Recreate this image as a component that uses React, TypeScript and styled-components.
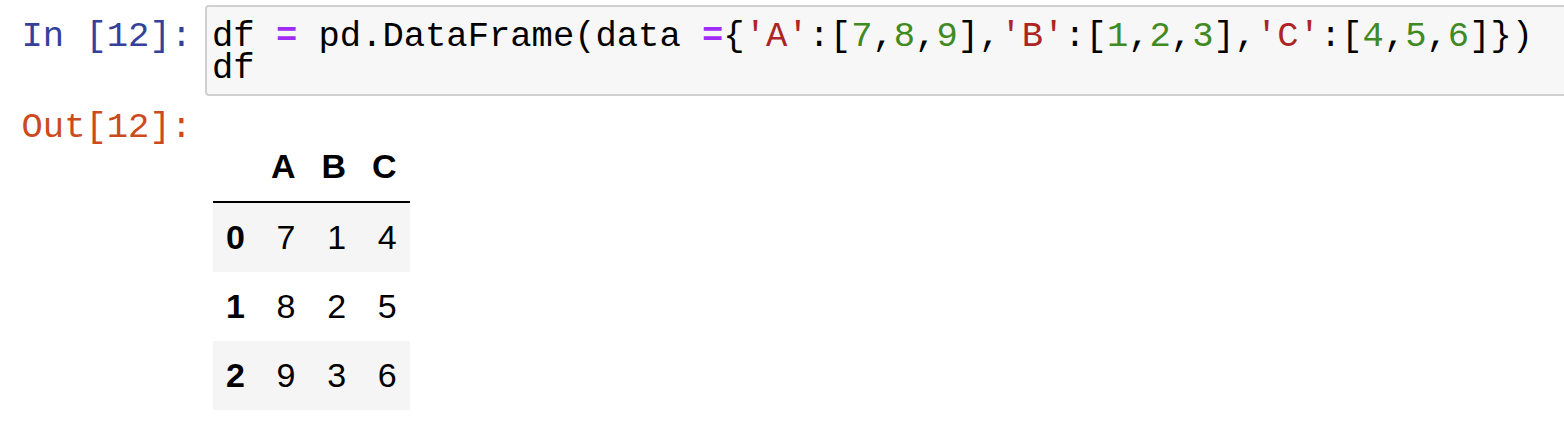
import React from "react";
import styled, { createGlobalStyle } from "styled-components";

const GlobalStyle = createGlobalStyle`
  html, body {
    margin: 0;
    padding: 0;
    background: #ffffff;
    overflow: hidden;
  }
  body {
    font-family: "Liberation Sans", Arial, sans-serif;
  }
`;

const Notebook = styled.div`
  display: flex;
  flex-direction: column;
  padding-top: 5px;
`;

const CellRow = styled.div`
  display: flex;
  align-items: flex-start;
`;

const Prompt = styled.div<{ $kind: "in" | "out" }>`
  flex: 0 0 192px;
  width: 192px;
  text-align: right;
  font-family: "Liberation Mono", "Courier New", monospace;
  font-size: 35.5px;
  line-height: 32px;
  padding-top: 16px;
  white-space: pre;
  color: ${(p) => (p.$kind === "in" ? "#33409c" : "#cc4a1e")};
`;

const InputArea = styled.div`
  flex: 0 0 auto;
  width: 1420px;
  margin-left: 13px;
  box-sizing: border-box;
  border: 2px solid #d0d0d0;
  border-radius: 4px;
  background: #f7f7f7;
  padding: 14px 0 9px 5px;
`;

const CodeLine = styled.div`
  font-family: "Liberation Mono", "Courier New", monospace;
  font-size: 35.5px;
  line-height: 32px;
  color: #000000;
  white-space: pre;
`;

type TokKind = "op" | "str" | "num" | "plain";

const Tok = styled.span<{ $kind: TokKind }>`
  color: ${(p) =>
    p.$kind === "op"
      ? "#a22cf7"
      : p.$kind === "str"
      ? "#ae2424"
      : p.$kind === "num"
      ? "#3f8a22"
      : "#000000"};
  font-weight: ${(p) => (p.$kind === "op" ? 700 : 400)};
`;

const OutputArea = styled.div`
  margin-left: 21px;
  padding-top: 36px;
`;

const DataTable = styled.table`
  border-collapse: collapse;
  border-spacing: 0;
  font-family: "Liberation Sans", Arial, Helvetica, sans-serif;
  font-size: 34px;
  color: #000000;
`;

const HeadRow = styled.tr`
  border-bottom: 2px solid #000000;
`;

const HeadCell = styled.th`
  font-weight: 700;
  text-align: right;
  vertical-align: bottom;
  padding: 15px 13px;
  line-height: normal;
`;

const BodyRow = styled.tr<{ $striped: boolean }>`
  background: ${(p) => (p.$striped ? "#f5f5f5" : "#ffffff")};
`;

const IndexCell = styled.th`
  font-weight: 700;
  text-align: right;
  vertical-align: middle;
  padding: 15px 13px;
  line-height: normal;
`;

const ValueCell = styled.td`
  font-weight: 400;
  text-align: right;
  vertical-align: middle;
  padding: 15px 13px;
  line-height: normal;
`;

const codeTokens: [TokKind, string][] = [
  ["plain", "df "],
  ["op", "="],
  ["plain", " pd.DataFrame(data "],
  ["op", "="],
  ["plain", "{"],
  ["str", "'A'"],
  ["plain", ":["],
  ["num", "7"],
  ["plain", ","],
  ["num", "8"],
  ["plain", ","],
  ["num", "9"],
  ["plain", "],"],
  ["str", "'B'"],
  ["plain", ":["],
  ["num", "1"],
  ["plain", ","],
  ["num", "2"],
  ["plain", ","],
  ["num", "3"],
  ["plain", "],"],
  ["str", "'C'"],
  ["plain", ":["],
  ["num", "4"],
  ["plain", ","],
  ["num", "5"],
  ["plain", ","],
  ["num", "6"],
  ["plain", "]})"],
];

const columns = ["A", "B", "C"];
const rows: { index: number; values: number[] }[] = [
  { index: 0, values: [7, 1, 4] },
  { index: 1, values: [8, 2, 5] },
  { index: 2, values: [9, 3, 6] },
];

export default function App() {
  return (
    <>
      <GlobalStyle />
      <Notebook>
        <CellRow>
          <Prompt $kind="in">In [12]:</Prompt>
          <InputArea>
            <CodeLine>
              {codeTokens.map(([kind, text], i) => (
                <Tok key={i} $kind={kind}>
                  {text}
                </Tok>
              ))}
            </CodeLine>
            <CodeLine>df</CodeLine>
          </InputArea>
        </CellRow>
        <CellRow>
          <Prompt $kind="out">Out[12]:</Prompt>
          <OutputArea>
            <DataTable>
              <thead>
                <HeadRow>
                  <HeadCell />
                  {columns.map((c) => (
                    <HeadCell key={c}>{c}</HeadCell>
                  ))}
                </HeadRow>
              </thead>
              <tbody>
                {rows.map((r) => (
                  <BodyRow key={r.index} $striped={r.index % 2 === 0}>
                    <IndexCell>{r.index}</IndexCell>
                    {r.values.map((v, j) => (
                      <ValueCell key={j}>{v}</ValueCell>
                    ))}
                  </BodyRow>
                ))}
              </tbody>
            </DataTable>
          </OutputArea>
        </CellRow>
      </Notebook>
    </>
  );
}
